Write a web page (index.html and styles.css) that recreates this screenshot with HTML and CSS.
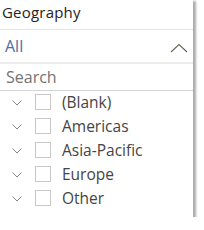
FILE: index.html
```html
<!DOCTYPE html>
<html>
<head>
<meta charset="utf-8">
<link rel="stylesheet" href="styles.css">
</head>
<body>
<div class="panel">
  <div class="header">Geography</div>
  <div class="dropdown">
    <span class="value">All</span>
    <svg class="chev-up" width="18" height="10" viewBox="0 0 18 10"><path d="M1 9 L9 1.5 L17 9" fill="none" stroke="#6b6455" stroke-width="1.1"/></svg>
  </div>
  <div class="search">Search</div>
  <ul class="list">
    <li class="row"><svg class="chev" width="10" height="6" viewBox="0 0 10 6"><path d="M0.5 0.5 L5 5 L9.5 0.5" fill="none" stroke="#888" stroke-width="1"/></svg><span class="box"></span><span class="label">(Blank)</span></li>
    <li class="row"><svg class="chev" width="10" height="6" viewBox="0 0 10 6"><path d="M0.5 0.5 L5 5 L9.5 0.5" fill="none" stroke="#888" stroke-width="1"/></svg><span class="box"></span><span class="label">Americas</span></li>
    <li class="row"><svg class="chev" width="10" height="6" viewBox="0 0 10 6"><path d="M0.5 0.5 L5 5 L9.5 0.5" fill="none" stroke="#888" stroke-width="1"/></svg><span class="box"></span><span class="label">Asia-Pacific</span></li>
    <li class="row"><svg class="chev" width="10" height="6" viewBox="0 0 10 6"><path d="M0.5 0.5 L5 5 L9.5 0.5" fill="none" stroke="#888" stroke-width="1"/></svg><span class="box"></span><span class="label">Europe</span></li>
    <li class="row"><svg class="chev" width="10" height="6" viewBox="0 0 10 6"><path d="M0.5 0.5 L5 5 L9.5 0.5" fill="none" stroke="#888" stroke-width="1"/></svg><span class="box"></span><span class="label">Other</span></li>
  </ul>
</div>
</body>
</html>
```
FILE: styles.css
```css
html, body {
  margin: 0;
  padding: 0;
  background: #fff;
}
body {
  font-family: "Open Sans", "Noto Sans", sans-serif;
}
.panel {
  width: 193px;
  height: 217px;
  background: #fff;
  box-shadow: 2px 2px 2px 1px rgba(0, 0, 0, 0.32);
  display: flex;
  flex-direction: column;
}
.header {
  height: 29px;
  border-bottom: 1px solid #e6e6e6;
  padding-left: 2px;
  font-size: 15px;
  line-height: 24px;
  color: #252423;
  letter-spacing: 0.2px;
}
.dropdown {
  height: 32px;
  border-bottom: 2px solid #ececec;
  display: flex;
  align-items: center;
  justify-content: space-between;
  padding: 0 5px 0 5px;
}
.value {
  font-size: 16px;
  color: #4a6fa5;
  line-height: 20px;
}
.chev-up {
  display: block;
  margin-top: 3px;
}
.search {
  height: 26px;
  border-bottom: 1px solid #d4d4d4;
  padding-left: 6px;
  font-size: 16px;
  line-height: 27px;
  color: #737373;
}
.list {
  list-style: none;
  margin: 0;
  padding: 0;
}
.row {
  height: 24px;
  display: flex;
  align-items: center;
}
.chev {
  display: block;
  margin-left: 12px;
  width: 10px;
  height: 6px;
}
.box {
  width: 14px;
  height: 14px;
  border: 1px solid #c8c8c8;
  margin-left: 13px;
  margin-top: -2px;
}
.label {
  margin-left: 11px;
  font-size: 15.5px;
  color: #454545;
  margin-top: -3px;
}
```
